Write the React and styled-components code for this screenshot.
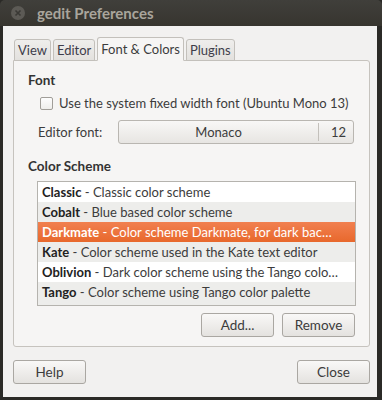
import styled, { createGlobalStyle } from "styled-components";

const Global = createGlobalStyle`
  html, body { margin: 0; padding: 0; background: #2b2a27; }
  body { font-family: Lato, "Noto Sans", "DejaVu Sans", sans-serif; }
`;

const schemes = [
  { name: "Classic", desc: "Classic color scheme" },
  { name: "Cobalt", desc: "Blue based color scheme" },
  { name: "Darkmate", desc: "Color scheme Darkmate, for dark bac\u2026", selected: true },
  { name: "Kate", desc: "Color scheme used in the Kate text editor" },
  { name: "Oblivion", desc: "Dark color scheme using the Tango colo\u2026" },
  { name: "Tango", desc: "Color scheme using Tango color palette" },
];

export default function App() {
  return (
    <>
      <Global />
      <Window>
        <TitleBar>
          <CloseDot>
            <svg width="8" height="8" viewBox="0 0 8 8">
              <path d="M1.5 1.5 L6.5 6.5 M6.5 1.5 L1.5 6.5" stroke="#3a3935" strokeWidth="1.6" />
            </svg>
          </CloseDot>
          <Title>gedit Preferences</Title>
        </TitleBar>
        <Body>
          <Tabs>
            <Tab>View</Tab>
            <Tab>Editor</Tab>
            <Tab $active>Font &amp; Colors</Tab>
            <Tab>Plugins</Tab>
          </Tabs>
          <Panel>
            <SectionTitle>Font</SectionTitle>
            <CheckRow>
              <CheckBox />
              <span>Use the system fixed width font (Ubuntu Mono 13)</span>
            </CheckRow>
            <FontRow>
              <span>Editor font:</span>
              <FontButton>
                <FontName>Monaco</FontName>
                <FontSize>12</FontSize>
              </FontButton>
            </FontRow>
            <SectionTitle $gap>Color Scheme</SectionTitle>
            <List>
              {schemes.map((s, i) => (
                <Row key={s.name} $odd={i % 2 === 1} $selected={s.selected}>
                  <b>{s.name}</b> - {s.desc}
                </Row>
              ))}
            </List>
            <ListActions>
              <Button>Add...</Button>
              <Button>Remove</Button>
            </ListActions>
          </Panel>
          <Footer>
            <Button>Help</Button>
            <Button>Close</Button>
          </Footer>
        </Body>
      </Window>
    </>
  );
}

const Window = styled.div`
  width: 382px;
  height: 400px;
  box-sizing: border-box;
  background: #2b2a27;
  padding: 0 5px 3px 3px;
  display: flex;
  flex-direction: column;
  border-radius: 5px 5px 0 0;
  overflow: hidden;
`;

const TitleBar = styled.div`
  height: 26px;
  margin: 0 -5px 0 -3px;
  background: linear-gradient(#403f3b, #37352f);
  display: flex;
  align-items: center;
  padding-left: 11px;
  gap: 12px;
  flex-shrink: 0;
`;

const CloseDot = styled.div`
  width: 14px;
  height: 14px;
  border-radius: 50%;
  background: #5c5a55;
  display: flex;
  align-items: center;
  justify-content: center;
`;

const Title = styled.span`
  color: #a9a59c;
  font-weight: bold;
  font-size: 15px;
`;

const Body = styled.div`
  flex: 1;
  background: #f2f1f0;
  padding: 11px 7px 0 10px;
  display: flex;
  flex-direction: column;
  color: #3c3c3c;
  font-size: 13px;
`;

const Tabs = styled.div`
  display: flex;
  align-items: flex-end;
  gap: 2px;
  height: 24px;
  padding-left: 1px;
  position: relative;
  z-index: 1;
  margin-bottom: -1px;
`;

const Tab = styled.div`
  height: ${(p) => (p.$active ? "24px" : "22px")};
  box-sizing: border-box;
  padding: 0 3px;
  display: flex;
  align-items: center;
  border: 1px solid #c3c0bb;
  border-bottom: ${(p) => (p.$active ? "1px solid #f6f5f4" : "1px solid #c3c0bb")};
  border-radius: 3px 3px 0 0;
  background: ${(p) => (p.$active ? "#f6f5f4" : "linear-gradient(#efeeec, #e3e1de)")};
  color: ${(p) => (p.$active ? "#3c3c3c" : "#3e3d4a")};
  font-size: 13px;
`;

const Panel = styled.div`
  height: 287px;
  box-sizing: border-box;
  border: 1px solid #c6c3be;
  border-radius: 0 3px 3px 3px;
  background: #f6f5f4;
  padding: 10px 13px 0 14px;
  display: flex;
  flex-direction: column;
`;

const SectionTitle = styled.div`
  font-weight: bold;
  color: #333;
  font-size: 13.5px;
  line-height: 18px;
  margin-top: ${(p) => (p.$gap ? "13px" : "0")};
`;

const CheckRow = styled.label`
  display: flex;
  align-items: center;
  gap: 6px;
  margin: 5px 0 0 12px;
  height: 18px;
  white-space: nowrap;
`;

const CheckBox = styled.span`
  width: 11px;
  height: 11px;
  flex-shrink: 0;
  border: 1px solid #a19e99;
  border-radius: 2px;
  background: linear-gradient(#fdfdfd, #efeeec);
`;

const FontRow = styled.div`
  display: flex;
  align-items: center;
  gap: 16px;
  margin: 8px 0 0 10px;
`;

const FontButton = styled.div`
  flex: 1;
  height: 24px;
  box-sizing: border-box;
  margin-right: 2px;
  border: 1px solid #b9b6b1;
  border-radius: 3px;
  background: linear-gradient(#f8f7f6, #e7e5e2);
  display: flex;
  align-items: center;
`;

const FontName = styled.span`
  flex: 1;
  text-align: center;
`;

const FontSize = styled.span`
  border-left: 1px solid #c3c0bb;
  height: 18px;
  line-height: 18px;
  padding: 0 7px 0 12px;
`;

const List = styled.div`
  margin: 6px 0 0 9px;
  border: 1px solid #b5b3ae;
  background: #ededeb;
  height: 125px;
  box-sizing: border-box;
`;

const Row = styled.div`
  height: 20px;
  line-height: 20px;
  padding-left: 4px;
  white-space: nowrap;
  overflow: hidden;
  background: ${(p) => (p.$selected ? "linear-gradient(#f18050, #e8682c)" : p.$odd ? "#ededeb" : "#ffffff")};
  color: ${(p) => (p.$selected ? "#ffffff" : "#3c3c3c")};
  b { color: ${(p) => (p.$selected ? "#ffffff" : "#222")}; }
`;

const ListActions = styled.div`
  display: flex;
  justify-content: flex-end;
  gap: 8px;
  margin-top: 7px;
  margin-right: 1px;
`;

const Button = styled.div`
  width: 73px;
  height: 24px;
  box-sizing: border-box;
  border: 1px solid #aaa7a2;
  border-radius: 3px;
  background: linear-gradient(#f9f8f7, #e4e2df);
  display: flex;
  align-items: center;
  justify-content: center;
  color: #3c3c3c;
  font-size: 13.5px;
`;

const Footer = styled.div`
  display: flex;
  justify-content: space-between;
  margin-top: 13px;
  padding-left: 0;
`;
